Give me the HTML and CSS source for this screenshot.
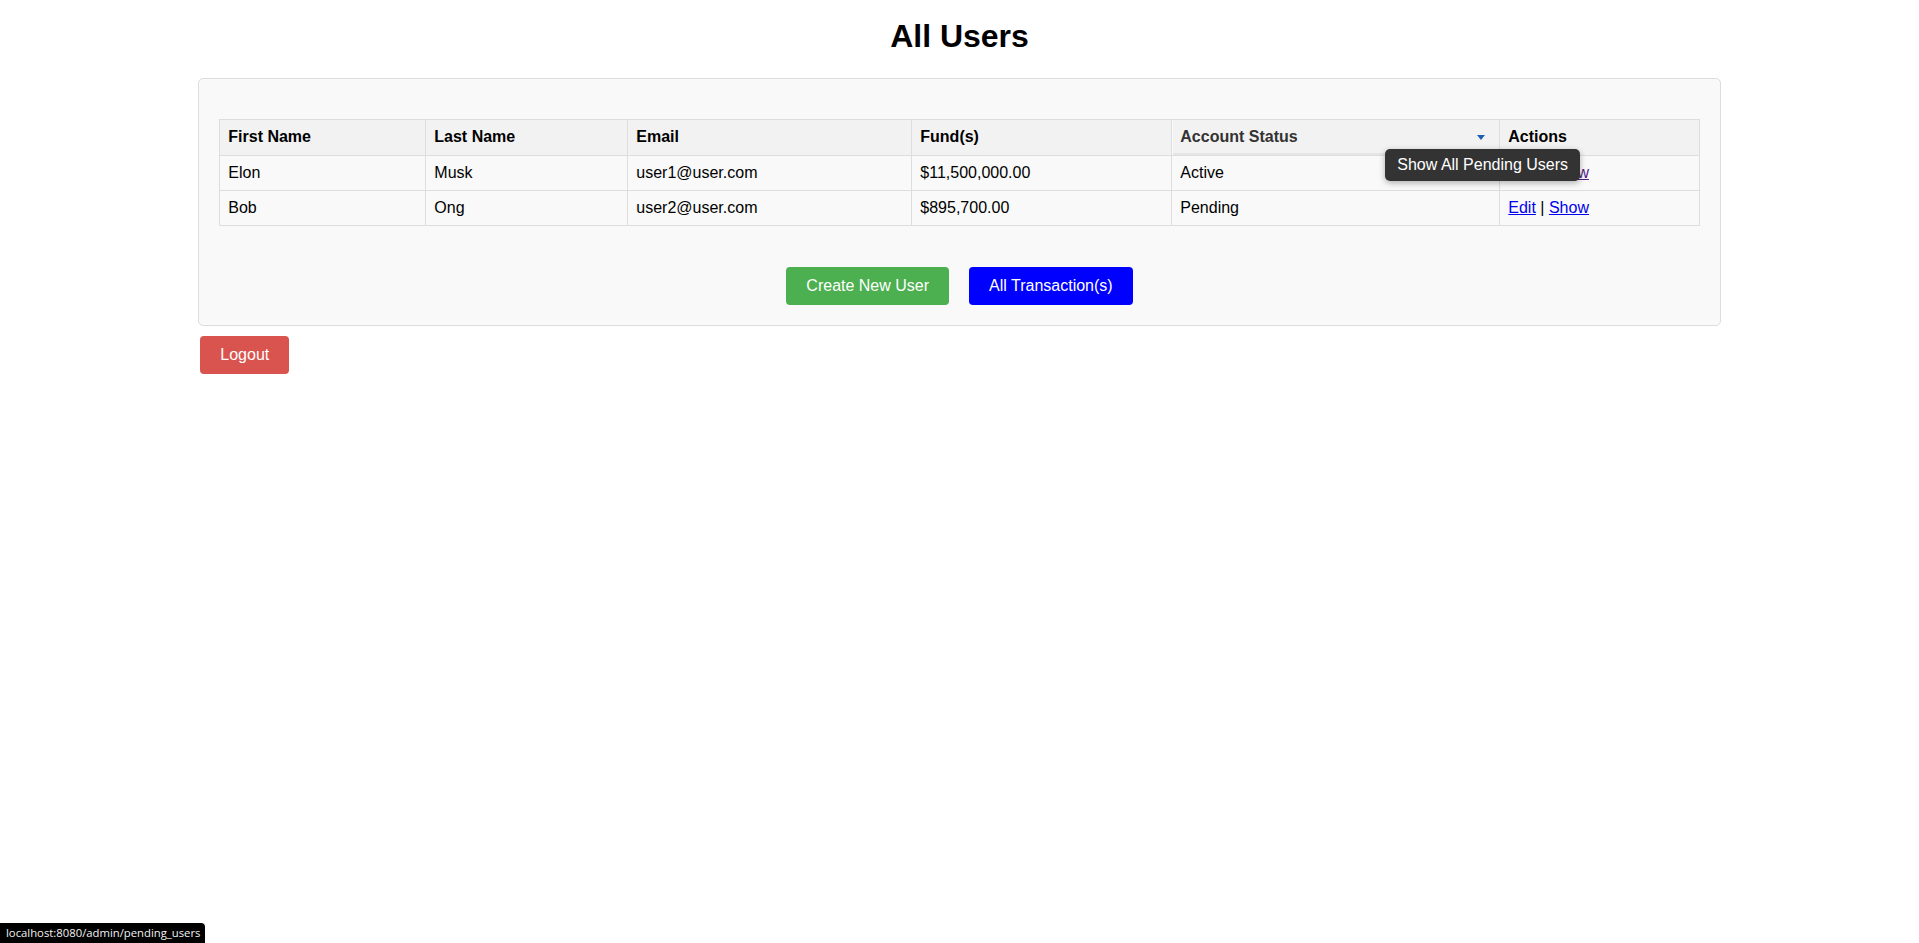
FILE: index.html
```html
<!DOCTYPE html>
<html lang="en">
<head>
<meta charset="utf-8">
<title>All Users</title>
<link rel="stylesheet" href="styles.css">
</head>
<body>
<div class="page">
  <h1 class="title">All Users</h1>
  <div class="panel">
    <table class="users">
      <colgroup>
        <col class="c-first">
        <col class="c-last">
        <col class="c-email">
        <col class="c-fund">
        <col class="c-status">
        <col class="c-actions">
      </colgroup>
      <thead>
        <tr>
          <th>First Name</th>
          <th>Last Name</th>
          <th>Email</th>
          <th>Fund(s)</th>
          <th class="status-th">
            <div class="dropdown">
              <span>Account Status</span>
              <span class="caret"></span>
            </div>
            <div class="tooltip">Show All Pending Users</div>
          </th>
          <th>Actions</th>
        </tr>
      </thead>
      <tbody>
        <tr>
          <td>Elon</td>
          <td>Musk</td>
          <td>user1@user.com</td>
          <td>$11,500,000.00</td>
          <td>Active</td>
          <td><a class="visited" href="#">Edit</a> | <a class="visited" href="#">Show</a></td>
        </tr>
        <tr>
          <td>Bob</td>
          <td>Ong</td>
          <td>user2@user.com</td>
          <td>$895,700.00</td>
          <td>Pending</td>
          <td><a href="#">Edit</a> | <a href="#">Show</a></td>
        </tr>
      </tbody>
    </table>
    <div class="actions">
      <a class="btn btn-green" href="#">Create New User</a>
      <a class="btn btn-blue" href="#">All Transaction(s)</a>
    </div>
  </div>
  <div class="logout-row">
    <a class="btn btn-red" href="#">Logout</a>
  </div>
</div>
<div class="statusbar">localhost:8080/admin/pending_users</div>
</body>
</html>
```

FILE: styles.css
```css
html, body {
  margin: 0;
  padding: 0;
  background: #ffffff;
}

body {
  font-family: "Liberation Sans", Arial, sans-serif;
  font-size: 16px;
  color: #000;
}

.page {
  padding: 0 8px;
}

.title {
  margin: 19px 0 25px;
  font-size: 32px;
  line-height: 34px;
  font-weight: bold;
  text-align: center;
}

.panel {
  box-sizing: border-box;
  width: 80%;
  margin: 0 auto;
  padding: 20px;
  background: #f9f9f9;
  border: 1px solid #dcdcdc;
  border-radius: 5px;
}

.users {
  width: 100%;
  margin: 20px 0 0;
  border-collapse: collapse;
  table-layout: fixed;
}

.c-first { width: 206px; }
.c-last { width: 202px; }
.c-email { width: 284px; }
.c-fund { width: 260px; }
.c-status { width: 328px; }

.users th,
.users td {
  border: 1px solid #dddddd;
  padding: 8px;
  text-align: left;
  line-height: 18px;
}

.users th {
  background: #f2f2f2;
  font-weight: bold;
  padding-bottom: 9px;
}

.users td {
  background: #f9f9f9;
}

.status-th {
  position: relative;
  box-shadow: inset 1px 0 0 #fafafa, inset 0 -2px 0 #e6e6e6;
}

.dropdown {
  display: flex;
  align-items: center;
  justify-content: space-between;
  color: #333333;
  padding-right: 6px;
  margin-top: -1px;
}

.caret {
  width: 0;
  height: 0;
  border-left: 4.5px solid transparent;
  border-right: 4.5px solid transparent;
  border-top: 5px solid #1b5fb5;
  margin-top: 2px;
}

.tooltip {
  position: absolute;
  left: 213px;
  top: 29px;
  z-index: 5;
  padding: 7px 12px;
  background: #333333;
  color: #ffffff;
  font-weight: normal;
  white-space: nowrap;
  border-radius: 5px;
  box-shadow: 0 2px 6px rgba(0, 0, 0, 0.3);
}

.users a {
  color: #0000ee;
  text-decoration: underline;
}

.users a.visited {
  color: #551a8b;
}

.actions {
  display: flex;
  justify-content: center;
  gap: 20px;
  margin-top: 41px;
}

.btn {
  display: inline-block;
  padding: 10px 20px;
  line-height: 18px;
  color: #ffffff;
  text-decoration: none;
  border-radius: 4px;
}

.btn-green {
  background: #4caf50;
}

.btn-blue {
  background: #0000ff;
}

.btn-red {
  background: #d9534f;
}

.logout-row {
  width: 80%;
  margin: 10px auto 0;
  padding-left: 2px;
  box-sizing: border-box;
}

.statusbar {
  position: fixed;
  left: 0;
  bottom: 0;
  height: 20px;
  line-height: 20px;
  padding: 0 5px 0 6px;
  background: #000000;
  color: #f2f2f2;
  font-family: "Open Sans", "Noto Sans", sans-serif;
  font-size: 11.3px;
  border-top-right-radius: 4px;
}
```
